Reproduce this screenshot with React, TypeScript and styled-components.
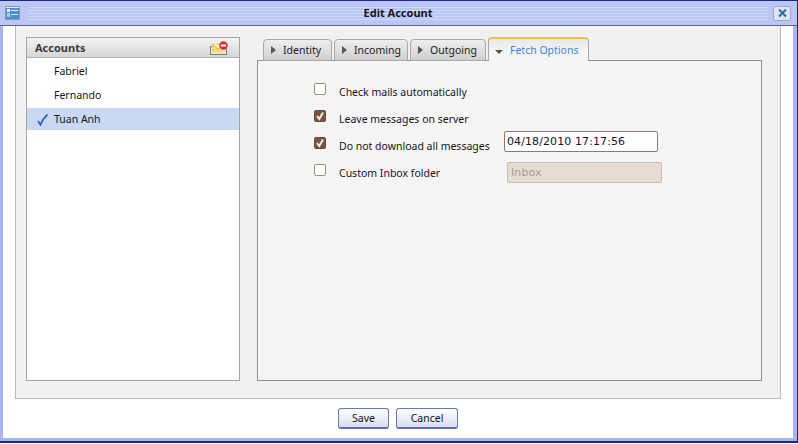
import styled, { createGlobalStyle } from "styled-components";

const uiFont = `"Noto Sans", sans-serif`;
const monoFont = `"DejaVu Sans", sans-serif`;

const GlobalStyle = createGlobalStyle`
  html, body {
    margin: 0;
    padding: 0;
    background: #fff;
  }
  body {
    font-family: ${uiFont};
    font-size: 10.5px;
    color: #1c1c1c;
  }
`;

const Frame = styled.div`
  box-sizing: border-box;
  width: 798px;
  height: 443px;
  display: flex;
  flex-direction: column;
  border-top: 1px solid #1e2a78;
  border-right: 1px solid #1e2a78;
  border-bottom: 2px solid #1e2a78;
  background: #a9b3ec;
`;

const TitleBar = styled.div`
  box-sizing: border-box;
  height: 25px;
  flex: none;
  display: flex;
  align-items: center;
  padding: 0 6px 0 5px;
  background: #bcc6f5;
  border-bottom: 1px solid #5f6478;
`;

const Stripes = styled.div`
  flex: 1;
  height: 13px;
  margin: 0 5px 0 8px;
  display: flex;
  align-items: center;
  justify-content: center;
  background: repeating-linear-gradient(
    to bottom,
    #d2d9fa 0,
    #d2d9fa 1px,
    #bcc6f5 1px,
    #bcc6f5 3px
  );
`;

const Title = styled.div`
  font-weight: bold;
  font-size: 11px;
  color: #14141c;
  line-height: 14px;
`;

const CloseButton = styled.button`
  box-sizing: border-box;
  width: 18px;
  height: 15px;
  padding: 0;
  display: flex;
  align-items: center;
  justify-content: center;
  background: #dfe3f2;
  border: 1px solid #a4a8bc;
  border-radius: 2px;
`;

const Body = styled.div`
  flex: 1;
  display: flex;
  flex-direction: column;
  margin: 0 4px 3px 3px;
  padding: 0 12px;
  min-height: 0;
  background: #fff;
`;

const Panel = styled.div`
  box-sizing: border-box;
  height: 373px;
  flex: none;
  display: flex;
  padding: 11px 18px 17px 10px;
  background: #f1f1f1;
  border: 1px solid #bbbbbb;
  border-top: none;
`;

const AccountsBox = styled.div`
  box-sizing: border-box;
  width: 214px;
  display: flex;
  flex-direction: column;
  background: #fff;
  border: 1px solid #a3a3a3;
`;

const AccountsHeader = styled.div`
  box-sizing: border-box;
  height: 20px;
  display: flex;
  align-items: center;
  justify-content: space-between;
  padding: 0 11px 0 8px;
  font-size: 11px;
  font-weight: bold;
  color: #3a3a3a;
  background: linear-gradient(to bottom, #f4f4f4, #d6d6d6);
  border-bottom: 1px solid #b4b4b4;
`;

const AccountList = styled.div`
  display: flex;
  flex-direction: column;
  gap: 2px;
  padding-top: 2px;
`;

const AccountRow = styled.div<{ $selected?: boolean }>`
  height: 22px;
  display: flex;
  align-items: center;
  padding-left: 27px;
  position: relative;
  color: #14141c;
  background: ${({ $selected }) => ($selected ? "#c9d8f3" : "transparent")};
`;

const CheckMark = styled.svg`
  position: absolute;
  left: 10px;
  top: 6px;
`;

const TabArea = styled.div`
  flex: 1;
  margin-left: 17px;
  display: flex;
  flex-direction: column;
`;

const TabStrip = styled.div`
  height: 24px;
  display: flex;
  align-items: flex-end;
  gap: 2px;
  padding-left: 6px;
  margin-bottom: -1px;
  position: relative;
  z-index: 1;
`;

const Tab = styled.div<{ $active?: boolean; $w: number }>`
  box-sizing: border-box;
  width: ${({ $w }) => $w}px;
  height: ${({ $active }) => ($active ? 24 : 22)}px;
  display: flex;
  align-items: center;
  gap: 7px;
  padding-left: ${({ $active }) => ($active ? 6 : 7)}px;
  border: 1px solid #a8a8a8;
  border-bottom: ${({ $active }) => ($active ? "none" : "1px solid #a8a8a8")};
  border-top: ${({ $active }) => ($active ? "2px solid #f0c04c" : "1px solid #a8a8a8")};
  border-radius: 4px 4px 0 0;
  color: ${({ $active }) => ($active ? "#3f86cf" : "#222")};
  background: ${({ $active }) =>
    $active ? "linear-gradient(to bottom, #e8e8e8, #f5f5f5 60%)" : "linear-gradient(to bottom, #efefef, #cfcfcf)"};
`;

const TabPane = styled.div`
  box-sizing: border-box;
  flex: 1;
  background: #f5f5f5;
  border: 1px solid #8f8f8f;
  padding: 18px 0 0 56px;
  display: flex;
  flex-direction: column;
`;

const FormRow = styled.div`
  height: 27px;
  display: flex;
  align-items: center;
`;

const CheckBox = styled.span<{ $checked?: boolean }>`
  box-sizing: border-box;
  width: 12px;
  height: 12px;
  margin-bottom: 8px;
  flex: none;
  display: flex;
  align-items: center;
  justify-content: center;
  border-radius: 2px;
  border: 1px solid ${({ $checked }) => ($checked ? "#6d4a3c" : "#a08c80")};
  background: ${({ $checked }) => ($checked ? "#7a5444" : "#fff")};
`;

const Label = styled.span`
  width: 165px;
  flex: none;
  margin-left: 13px;
  margin-bottom: 2px;
  color: #14141c;
  white-space: nowrap;
`;

const Field = styled.input<{ $left: number; $lift: number; $w: number }>`
  box-sizing: border-box;
  width: ${({ $w }) => $w}px;
  height: 21px;
  margin-left: ${({ $left }) => $left}px;
  margin-bottom: ${({ $lift }) => $lift}px;
  padding: 0 2px;
  font: 11px ${monoFont};
  letter-spacing: 0.1px;
  color: #14141c;
  background: #fff;
  border: 1px solid #8c7a70;
  border-radius: 2px;
  outline: none;

  &:disabled {
    padding-left: 3px;
    background: #e6dcd2;
    border-color: #c8bcb0;
    color: #a89c92;
  }
`;

const Footer = styled.div`
  flex: 1;
  display: flex;
  align-items: flex-start;
  justify-content: center;
  gap: 7px;
  padding-top: 9px;
`;

const FooterButton = styled.button<{ $w: number }>`
  box-sizing: border-box;
  width: ${({ $w }) => $w}px;
  height: 21px;
  padding: 0;
  font: 10.5px ${uiFont};
  color: #14141c;
  background: linear-gradient(to bottom, #ffffff, #d8deee);
  border: 1px solid #6e7c9c;
  border-bottom: 2px solid #5b6fb4;
  border-radius: 3px;
`;

const ClosedArrow = () => (
  <svg width="5" height="8" viewBox="0 0 5 8">
    <path d="M0 0 L5 4 L0 8 Z" fill="#555" />
  </svg>
);

const OpenArrow = () => (
  <svg width="8" height="5" viewBox="0 0 8 5" style={{ marginTop: 4 }}>
    <path d="M0 0 H8 L4 4 Z" fill="#555" />
  </svg>
);

const Tick = () => (
  <svg width="10" height="10" viewBox="0 0 10 10">
    <path d="M2 5 L4.3 8 L8 1.5" fill="none" stroke="#f4ece6" strokeWidth="2" />
  </svg>
);

const tabs = [
  { name: "Identity", w: 69 },
  { name: "Incoming", w: 74 },
  { name: "Outgoing", w: 76 },
];

const accounts = ["Fabriel", "Fernando", "Tuan Anh"];

export default function App() {
  return (
    <>
      <GlobalStyle />
      <Frame>
        <TitleBar>
          <svg width="15" height="14" viewBox="0 0 15 14">
            <rect x="0.5" y="0.5" width="14" height="13" fill="#4f8fd0" stroke="#8a96a8" />
            <rect x="1" y="1" width="13" height="1" fill="#e6edf6" />
            <rect x="2" y="3" width="3" height="3" fill="#e8f4ff" />
            <rect x="2" y="7" width="3" height="4" fill="#a9d0f0" />
            <rect x="6" y="4" width="7" height="1" fill="#e8f4ff" />
            <rect x="6" y="8" width="7" height="1" fill="#cfe4f7" />
          </svg>
          <Stripes>
            <Title>Edit Account</Title>
          </Stripes>
          <CloseButton aria-label="Close">
            <svg width="11" height="10" viewBox="0 0 11 10">
              <path d="M2 1.5 L9 8.5 M9 1.5 L2 8.5" stroke="#2f6aa6" strokeWidth="2" />
            </svg>
          </CloseButton>
        </TitleBar>
        <Body>
          <Panel>
            <AccountsBox>
              <AccountsHeader>
                Accounts
                <svg width="18" height="14" viewBox="0 0 18 14">
                  <rect x="0.5" y="5.5" width="16" height="8" fill="#e8e4d0" stroke="#7c8078" />
                  <path d="M2 2.5 H12 V11 H2 Z" fill="#f6d774" />
                  <path d="M2 3 L8 8 L12 5" fill="#fdf3c8" stroke="#d8b050" />
                  <circle cx="13.5" cy="4.5" r="4.2" fill="#d8303a" />
                  <rect x="11" y="3.6" width="5" height="1.8" fill="#fff" />
                </svg>
              </AccountsHeader>
              <AccountList>
                {accounts.map((name, i) => (
                  <AccountRow key={name} $selected={i === 2}>
                    {i === 2 && (
                      <CheckMark width="11" height="12" viewBox="0 0 11 12">
                        <path d="M1 7 L3.5 11 Q5.5 5 10.5 0.5" fill="none" stroke="#2f5fb8" strokeWidth="1.6" />
                      </CheckMark>
                    )}
                    {name}
                  </AccountRow>
                ))}
              </AccountList>
            </AccountsBox>
            <TabArea>
              <TabStrip>
                {tabs.map((t) => (
                  <Tab key={t.name} $w={t.w}>
                    <ClosedArrow />
                    {t.name}
                  </Tab>
                ))}
                <Tab $active $w={101}>
                  <OpenArrow />
                  Fetch Options
                </Tab>
              </TabStrip>
              <TabPane>
                <FormRow>
                  <CheckBox />
                  <Label>Check mails automatically</Label>
                </FormRow>
                <FormRow>
                  <CheckBox $checked>
                    <Tick />
                  </CheckBox>
                  <Label>Leave messages on server</Label>
                </FormRow>
                <FormRow>
                  <CheckBox $checked>
                    <Tick />
                  </CheckBox>
                  <Label>Do not download all messages</Label>
                  <Field $left={0} $lift={10} $w={154} defaultValue="04/18/2010 17:17:56" />
                </FormRow>
                <FormRow>
                  <CheckBox />
                  <Label>Custom Inbox folder</Label>
                  <Field $left={3} $lift={2} $w={155} disabled defaultValue="Inbox" />
                </FormRow>
              </TabPane>
            </TabArea>
          </Panel>
          <Footer>
            <FooterButton $w={51}>Save</FooterButton>
            <FooterButton $w={62}>Cancel</FooterButton>
          </Footer>
        </Body>
      </Frame>
    </>
  );
}
